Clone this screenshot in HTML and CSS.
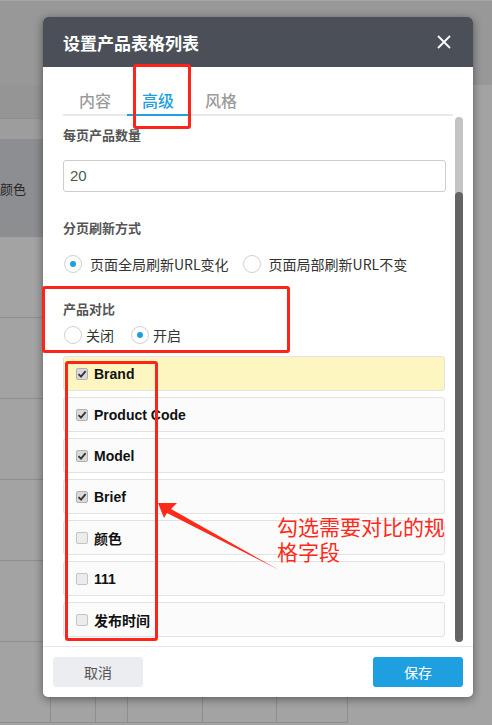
FILE: index.html
```html
<!DOCTYPE html>
<html lang="zh-CN">
<head>
    <meta charset="UTF-8">
    <meta name="viewport" content="width=device-width, initial-scale=1.0">
    <title>设置产品表格列表</title>
    <link rel="stylesheet" href="styles.css">
</head>
<body>
    <!-- 背后被遮罩的页面 -->
    <div class="page">
        <div class="topbar"></div>
        <div class="main">
            <div class="table">
                <div class="toolbar"></div>
                <div class="caption"></div>
                <div class="thead"><span>颜色</span></div>
                <div class="row"></div>
                <div class="row"></div>
                <div class="row"></div>
                <div class="row"></div>
                <div class="row"></div>
                <div class="row row_last">
                    <span class="cell c1"></span>
                    <span class="cell c2"></span>
                    <span class="cell c3"></span>
                    <span class="cell c4"></span>
                    <span class="cell c5"></span>
                    <span class="cell c6"></span>
                </div>
            </div>
            <div class="aside"></div>
        </div>
    </div>

    <!-- 弹窗 -->
    <div class="dialog">
        <div class="dialog_head">
            <h3>设置产品表格列表</h3>
            <a class="close">
                <svg width="14" height="14" viewBox="0 0 14 14"><path d="M1 1L13 13M13 1L1 13" stroke="#fff" stroke-width="1.8" fill="none"/></svg>
            </a>
        </div>
        <div class="dialog_body">
            <div class="pane">
                <div class="tabs">
                    <span class="tab">内容</span>
                    <span class="tab on">高级</span>
                    <span class="tab">风格</span>
                </div>
                <div class="scroll">
                    <div class="label">每页产品数量</div>
                    <div class="input">20</div>

                    <div class="label label_gap">分页刷新方式</div>
                    <div class="radios">
                        <label class="radio checked"><i></i>页面全局刷新URL变化</label>
                        <label class="radio"><i></i>页面局部刷新URL不变</label>
                    </div>

                    <div class="label label_gap2">产品对比</div>
                    <div class="radios radios_tight">
                        <label class="radio"><i></i>关闭</label>
                        <label class="radio checked"><i></i>开启</label>
                    </div>

                    <ul class="fields">
                        <li class="hl"><span class="check on"><svg width="10" height="10" viewBox="0 0 10 10"><path d="M1.5 5.2L4 7.6L8.6 2.2" stroke="#333" stroke-width="1.8" fill="none"/></svg></span>Brand</li>
                        <li><span class="check on"><svg width="10" height="10" viewBox="0 0 10 10"><path d="M1.5 5.2L4 7.6L8.6 2.2" stroke="#333" stroke-width="1.8" fill="none"/></svg></span>Product Code</li>
                        <li><span class="check on"><svg width="10" height="10" viewBox="0 0 10 10"><path d="M1.5 5.2L4 7.6L8.6 2.2" stroke="#333" stroke-width="1.8" fill="none"/></svg></span>Model</li>
                        <li><span class="check on"><svg width="10" height="10" viewBox="0 0 10 10"><path d="M1.5 5.2L4 7.6L8.6 2.2" stroke="#333" stroke-width="1.8" fill="none"/></svg></span>Brief</li>
                        <li><span class="check"></span>颜色</li>
                        <li><span class="check"></span>111</li>
                        <li><span class="check"></span>发布时间</li>
                    </ul>
                </div>
            </div>
            <div class="scrollbar"><div class="thumb"></div></div>
        </div>
        <div class="dialog_foot">
            <a class="btn btn_cancel">取消</a>
            <a class="btn btn_save">保存</a>
        </div>
    </div>

    <!-- 红色标注 -->
    <div class="mark mark_tab"></div>
    <div class="mark mark_compare"></div>
    <div class="mark mark_fields"></div>
    <svg class="arrow" width="130" height="75" viewBox="150 500 130 75">
        <polygon points="158,503 177,503 171,509 279,570 167,513 164,518" fill="#ff2a1a"/>
    </svg>
    <div class="note">勾选需要对比的规<br>格字段</div>
</body>
</html>
```

FILE: styles.css
```css
* {
    margin: 0;
    padding: 0;
    box-sizing: border-box;
}
ul {
    list-style: none;
}
a {
    text-decoration: none;
    cursor: pointer;
}
body {
    position: relative;
    width: 492px;
    height: 725px;
    overflow: hidden;
    background: #a3a3a3;
    font-family: "Liberation Sans", "Noto Sans CJK SC", sans-serif;
    font-size: 14px;
    color: #333;
}

/* 背景页面 */
.topbar {
    height: 85px;
    background: #989898;
    border-top: 1px solid #a6a6a6;
}
.main {
    display: flex;
    height: 640px;
}
.table {
    width: 348px;
}
.toolbar {
    height: 33px;
    background: #959595;
}
.caption {
    height: 21px;
    background: #9d9d9d;
    border-top: 1px solid #8f8f8f;
}
.thead {
    display: flex;
    align-items: center;
    height: 98px;
    background: #8c8e92;
    font-size: 13px;
    color: #262626;
}
.row {
    height: 81px;
    border-bottom: 1px solid #8e8e8e;
}
.row_last {
    display: flex;
    align-items: flex-end;
}
.cell {
    height: 32px;
    border-right: 1px solid #8e8e8e;
}
.c1 { width: 51px; }
.c2 { width: 45px; }
.c3 { width: 32px; }
.c4 { width: 75px; }
.c5 { width: 74px; }
.c6 { width: 71px; }
.aside {
    flex: 1;
}

/* 弹窗 */
.dialog {
    position: absolute;
    left: 43px;
    top: 17px;
    width: 430px;
    height: 680px;
    display: flex;
    flex-direction: column;
    background: #fff;
    border-radius: 5px;
    box-shadow: 0 2px 10px rgba(0, 0, 0, 0.45);
    overflow: hidden;
}
.dialog_head {
    display: flex;
    align-items: center;
    justify-content: space-between;
    height: 50px;
    padding: 0 22px 0 20px;
    background: #4b4f57;
}
.dialog_head h3 {
    font-family: "Noto Sans CJK SC", sans-serif;
    font-size: 17px;
    font-weight: bold;
    color: #fff;
}
.close {
    display: flex;
}
.dialog_body {
    display: flex;
    height: 579px;
}
.pane {
    width: 390px;
    margin-left: 20px;
    display: flex;
    flex-direction: column;
}
.tabs {
    display: flex;
    border-bottom: 2px solid #e8e8e8;
}
.tab {
    padding: 22px 16px 2px;
    font-family: "Noto Sans CJK SC", sans-serif;
    font-size: 16px;
    font-weight: 500;
    line-height: 23px;
    color: #9b9b9b;
    border-bottom: 2px solid transparent;
    margin-bottom: -2px;
}
.tab.on {
    color: #1e9fe0;
    border-bottom-color: #1e9fe0;
    padding: 22px 15px 2px;
}
.scroll {
    flex: 1;
    overflow: hidden;
    padding-top: 9px;
}
.label {
    font-family: "Noto Sans CJK SC", sans-serif;
    font-size: 13px;
    font-weight: bold;
    line-height: 20px;
    color: #555;
}
.label_gap {
    margin-top: 26px;
}
.label_gap2 {
    margin-top: 25px;
}
.input {
    margin-top: 15px;
    height: 32px;
    width: 383px;
    padding: 0 6px;
    border: 1px solid #ccc;
    border-radius: 3px;
    font-size: 15px;
    line-height: 30px;
    color: #555;
}
.radios {
    display: flex;
    gap: 14px;
    margin-top: 16px;
    margin-left: 1px;
}
.radio {
    display: flex;
    align-items: center;
    gap: 8px;
    height: 20px;
    font-family: "Noto Sans CJK SC", sans-serif;
    font-size: 14px;
    color: #333;
}
.radio i {
    display: flex;
    align-items: center;
    justify-content: center;
    width: 18px;
    height: 18px;
    border: 1px solid #d0d0d0;
    border-radius: 50%;
    background: #fff;
}
.radio.checked i::after {
    content: "";
    width: 6px;
    height: 6px;
    border-radius: 50%;
    background: #1e9fe0;
}
.radios_tight {
    margin-top: 6px;
    gap: 17px;
}
.radios_tight .radio {
    gap: 4px;
}
.fields {
    margin-top: 11px;
    width: 382px;
}
.fields li {
    display: flex;
    align-items: center;
    gap: 6px;
    height: 35px;
    margin-bottom: 6px;
    padding-left: 12px;
    background: #fbfbfb;
    border: 1px solid #e2e2e2;
    border-radius: 3px;
    font-family: "Liberation Sans", "Noto Sans CJK SC", sans-serif;
    font-weight: bold;
    font-size: 14px;
    color: #111;
}
.fields li.hl {
    background: #fef6c0;
}
.check {
    display: flex;
    align-items: center;
    justify-content: center;
    width: 12px;
    height: 12px;
    border: 1px solid #c4c4c4;
    border-radius: 2px;
    background: #ececec;
}
.check.on {
    background: #dadada;
    border-color: #b2b2b2;
}
.scrollbar {
    width: 8px;
    height: 525px;
    margin: 50px 0 0 2px;
    border-radius: 4px;
    background: #c3c3c3;
    display: flex;
    flex-direction: column;
}
.thumb {
    margin-top: 75px;
    flex: 1;
    border-radius: 4px;
    background: #646464;
}
.dialog_foot {
    display: flex;
    justify-content: space-between;
    padding: 10px;
    border-top: 1px solid #e6e6e6;
}
.btn {
    width: 90px;
    height: 30px;
    border-radius: 3px;
    text-align: center;
    line-height: 30px;
    font-family: "Noto Sans CJK SC", sans-serif;
    font-size: 14px;
}
.btn_cancel {
    background: #ebedf0;
    color: #555;
}
.btn_save {
    background: #1e9fe0;
    color: #fff;
}

/* 标注 */
.mark {
    position: absolute;
    border: 3px solid #ff2419;
    border-radius: 3px;
}
.mark_tab {
    left: 133px;
    top: 64px;
    width: 58px;
    height: 65px;
}
.mark_compare {
    left: 42px;
    top: 286px;
    width: 248px;
    height: 67px;
}
.mark_fields {
    left: 65px;
    top: 361px;
    width: 93px;
    height: 280px;
}
.arrow {
    position: absolute;
    left: 150px;
    top: 500px;
}
.note {
    position: absolute;
    left: 277px;
    top: 514px;
    font-family: "Noto Sans CJK SC", sans-serif;
    font-size: 21px;
    line-height: 25px;
    color: #ff2a1a;
}
```
